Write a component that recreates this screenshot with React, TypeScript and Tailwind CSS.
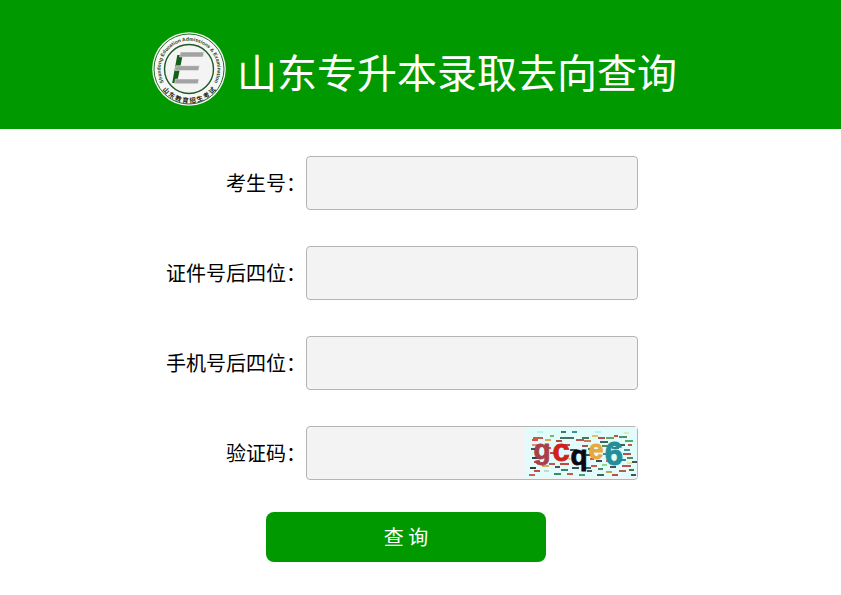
import { useState } from 'react';

const FIELDS = [
  { id: 'examNo', label: '考生号：' },
  { id: 'idTail', label: '证件号后四位：' },
  { id: 'phoneTail', label: '手机号后四位：' },
];

// x, y, length, colour
const CAPTCHA_DASHES: [number, number, number, string][] = [
  [35, 5, 5, '#235c50'], [46, 5, 5, '#207c83'], [34, 11, 14, '#2e5548'], [24, 9, 4, '#6fa64a'],
  [7, 11, 10, '#c5392e'], [6, 13, 6, '#d63227'], [19, 13, 6, '#e0962f'], [30, 14, 6, '#ad2920'],
  [50, 13, 8, '#b8342b'], [56, 11, 7, '#27633b'], [58, 14, 7, '#c8622e'], [66, 9, 6, '#e5b34d'],
  [72, 11, 7, '#b32e36'], [74, 15, 8, '#1d4d3e'], [80, 11, 8, '#4b9648'], [88, 9, 4, '#b53329'],
  [93, 10, 8, '#367c4b'], [99, 14, 8, '#3e9c4d'], [94, 18, 5, '#2c3a33'], [102, 18, 4, '#bd3729'],
  [6, 18, 5, '#ee7467'], [5, 22, 6, '#243048'], [6, 31, 9, '#181f2b'], [8, 35, 5, '#b52a2a'],
  [21, 21, 4, '#db3b2f'], [24, 26, 7, '#bb2a2a'], [35, 18, 9, '#b82724'], [44, 23, 7, '#20343a'],
  [49, 26, 6, '#3a7770'], [56, 19, 6, '#9c3431'], [62, 22, 6, '#256f3d'], [60, 28, 7, '#203832'],
  [76, 19, 7, '#2f7d32'], [77, 27, 5, '#207b81'], [80, 34, 6, '#c43a2d'], [86, 21, 7, '#1d6a76'],
  [98, 23, 6, '#248489'], [97, 27, 8, '#b52c27'], [101, 31, 6, '#357746'], [94, 33, 6, '#286979'],
  [106, 35, 5, '#27372f'], [70, 34, 6, '#262936'], [64, 32, 4, '#d43c32'], [54, 37, 6, '#224ca2'],
  [4, 41, 6, '#151c22'], [8, 44, 6, '#bf2b2b'], [16, 39, 7, '#d4a03a'], [23, 37, 6, '#b33a38'],
  [29, 40, 5, '#293c36'], [34, 37, 9, '#ba2827'], [35, 43, 7, '#207047'], [28, 47, 7, '#26734b'],
  [41, 47, 6, '#c9382c'], [46, 41, 7, '#21303a'], [57, 41, 8, '#224a46'], [61, 44, 5, '#303b3e'],
  [65, 39, 6, '#c83a30'], [72, 42, 5, '#2a7542'], [71, 48, 7, '#234b35'], [80, 45, 6, '#bd9133'],
  [84, 40, 6, '#2c3435'], [86, 48, 6, '#b82c25'], [93, 44, 7, '#b53a2f'], [96, 39, 9, '#bb3328'],
  [103, 43, 5, '#2c5b39'], [105, 48, 5, '#2e3331'], [3, 48, 6, '#c54236'], [53, 48, 6, '#358a61'],
  [18, 44, 5, '#b5d7cf'], [11, 5, 6, '#b5f0e8'], [69, 5, 6, '#b5eeed'], [98, 6, 5, '#d7e9b8'],
  [76, 38, 5, '#7ed66e'], [101, 36, 5, '#eae083'], [42, 32, 6, '#d7d27c'], [90, 36, 4, '#34aabb'],
];

const CAPTCHA_GLYPHS = [
  { char: 'g', x: 16, y: 32, size: 28, color: '#a83f4b' },
  { char: 'c', x: 35, y: 34, size: 31, color: '#d21f1d' },
  { char: 'q', x: 53, y: 38, size: 28, color: '#0b0912' },
  { char: 'e', x: 70, y: 32, size: 27, color: '#e9a83c' },
  { char: '6', x: 88, y: 38, size: 33, color: '#238f99' },
];

function Seal() {
  return (
    <svg className="size-[74px] shrink-0" viewBox="0 0 74 74" role="img" aria-label="山东教育招生考试">
      <defs>
        <path id="sealTop" d="M12.5 51.5 A28.4 28.4 0 1 1 61.5 51.5" />
        <path id="sealBottom" d="M6.9 52.4 A33.8 33.8 0 0 0 67.1 52.4" />
      </defs>
      <circle cx="37" cy="37" r="36.8" fill="#f7f7f7" />
      <circle cx="37" cy="37" r="35" fill="none" stroke="#276b30" strokeWidth="1" />
      <circle cx="37" cy="37" r="24.5" fill="#f3f4f3" stroke="#1e5a25" strokeWidth="1.4" />
      <path d="M25.3 23h5.4L25 51h-4.8z" fill="#12601a" />
      <path d="M28.5 20H52l-1 5H27.5zM24 33.7h23.5l-1 4.8H23zM23.5 47H47l-1 4.8H22.5z" fill="#a3a3a3" stroke="#f3f4f3" strokeWidth="0.5" />
      <text className="font-['Liberation_Sans',sans-serif] font-bold" fontSize="5" fill="#1c4321">
        <textPath href="#sealTop" startOffset="50%" textAnchor="middle">
          Shandong Education Admissions &amp; Examination
        </textPath>
      </text>
      <text className="font-bold" fontSize="6.4" fill="#141f16">
        <textPath href="#sealBottom" startOffset="50%" textAnchor="middle">
          山 东 教 育 招 生 考 试
        </textPath>
      </text>
    </svg>
  );
}

function Captcha() {
  return (
    <svg className="w-[111px] h-[51px]" viewBox="0 0 111 51" aria-hidden="true">
      <rect width="111" height="51" fill="#e2fcfb" />
      {CAPTCHA_DASHES.map(([x, y, w, color], i) => (
        <path key={i} d={`M${x} ${y}h${w}`} stroke={color} strokeWidth="1.7" />
      ))}
      <g className="font-['Liberation_Sans',sans-serif] font-bold" textAnchor="middle">
        {CAPTCHA_GLYPHS.map(({ char, x, y, size, color }) => (
          <text key={char} x={x} y={y} fontSize={size} fill={color} stroke={color} strokeWidth="0.8">
            {char}
          </text>
        ))}
      </g>
    </svg>
  );
}

const inputClass =
  'block w-full h-[54px] px-3 text-xl bg-[#f3f3f3] border border-[#b5b5b5] rounded-[4px] outline-none focus:border-[#009900]';

export default function App() {
  const [values, setValues] = useState<Record<string, string>>({});

  const update = (id: string, value: string) => setValues((prev) => ({ ...prev, [id]: value }));

  return (
    <div className="min-h-screen bg-white text-black font-['Noto_Sans_CJK_SC',sans-serif]">
      <header className="bg-[#009900] pt-8 pb-[23px]">
        <div className="max-w-[601px] mx-auto pl-8 flex items-center gap-[11px]">
          <Seal />
          <h1 className="pt-1 text-[40px] leading-[70px] font-normal text-white whitespace-nowrap">山东专升本录取去向查询</h1>
        </div>
      </header>

      <form className="max-w-[601px] mx-auto pt-[27px] pr-[83px]" onSubmit={(e) => e.preventDefault()}>
        <div className="grid grid-cols-[186px_1fr] gap-y-9 items-center">
          {FIELDS.map(({ id, label }) => (
            <div key={id} className="contents">
              <label htmlFor={id} className="text-xl text-right">{label}</label>
              <input
                id={id}
                type="text"
                className={inputClass}
                value={values[id] ?? ''}
                onChange={(e) => update(id, e.target.value)}
              />
            </div>
          ))}
          <label htmlFor="captcha" className="text-xl text-right">验证码：</label>
          <div className="relative">
            <input
              id="captcha"
              type="text"
              className={inputClass}
              value={values.captcha ?? ''}
              onChange={(e) => update('captcha', e.target.value)}
            />
            <button type="button" aria-label="换一张" className="absolute right-px top-px cursor-pointer">
              <Captcha />
            </button>
          </div>
        </div>

        <button
          type="submit"
          className="block w-[280px] h-[50px] mt-8 ml-[146px] rounded-lg bg-[#009900] hover:bg-[#008800] text-white text-xl cursor-pointer"
        >
          查 询
        </button>
      </form>
    </div>
  );
}
